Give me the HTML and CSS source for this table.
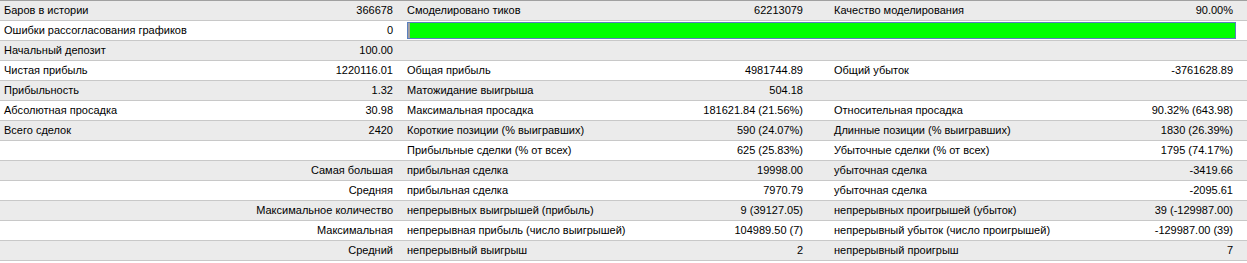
FILE: index.html
```html
<!DOCTYPE html>
<html lang="ru">
<head>
<meta charset="utf-8">
<title>Отчет тестера</title>
<link rel="stylesheet" href="styles.css">
</head>
<body>
<div class="report">
  <div class="row alt">
    <div class="lbl">Баров в истории</div><div class="val">366678</div>
    <div class="lbl2">Смоделировано тиков</div><div class="val">62213079</div>
    <div class="lbl3">Качество моделирования</div><div class="val3">90.00%</div>
  </div>
  <div class="row">
    <div class="lbl">Ошибки рассогласования графиков</div><div class="val">0</div>
    <div class="barcell"><div class="bar"></div></div>
  </div>
  <div class="row alt">
    <div class="lbl">Начальный депозит</div><div class="val">100.00</div>
    <div class="lbl2"></div><div class="val"></div><div class="lbl3"></div><div class="val3"></div>
  </div>
  <div class="row">
    <div class="lbl">Чистая прибыль</div><div class="val">1220116.01</div>
    <div class="lbl2">Общая прибыль</div><div class="val">4981744.89</div>
    <div class="lbl3">Общий убыток</div><div class="val3">-3761628.89</div>
  </div>
  <div class="row alt">
    <div class="lbl">Прибыльность</div><div class="val">1.32</div>
    <div class="lbl2">Матожидание выигрыша</div><div class="val">504.18</div>
    <div class="lbl3"></div><div class="val3"></div>
  </div>
  <div class="row">
    <div class="lbl">Абсолютная просадка</div><div class="val">30.98</div>
    <div class="lbl2">Максимальная просадка</div><div class="val">181621.84 (21.56%)</div>
    <div class="lbl3">Относительная просадка</div><div class="val3">90.32% (643.98)</div>
  </div>
  <div class="row alt">
    <div class="lbl">Всего сделок</div><div class="val">2420</div>
    <div class="lbl2">Короткие позиции (% выигравших)</div><div class="val">590 (24.07%)</div>
    <div class="lbl3">Длинные позиции (% выигравших)</div><div class="val3">1830 (26.39%)</div>
  </div>
  <div class="row">
    <div class="lbl"></div><div class="val"></div>
    <div class="lbl2">Прибыльные сделки (% от всех)</div><div class="val">625 (25.83%)</div>
    <div class="lbl3">Убыточные сделки (% от всех)</div><div class="val3">1795 (74.17%)</div>
  </div>
  <div class="row alt">
    <div class="head">Самая большая</div>
    <div class="lbl2">прибыльная сделка</div><div class="val">19998.00</div>
    <div class="lbl3">убыточная сделка</div><div class="val3">-3419.66</div>
  </div>
  <div class="row">
    <div class="head">Средняя</div>
    <div class="lbl2">прибыльная сделка</div><div class="val">7970.79</div>
    <div class="lbl3">убыточная сделка</div><div class="val3">-2095.61</div>
  </div>
  <div class="row alt">
    <div class="head">Максимальное количество</div>
    <div class="lbl2">непрерывных выигрышей (прибыль)</div><div class="val">9 (39127.05)</div>
    <div class="lbl3">непрерывных проигрышей (убыток)</div><div class="val3">39 (-129987.00)</div>
  </div>
  <div class="row">
    <div class="head">Максимальная</div>
    <div class="lbl2">непрерывная прибыль (число выигрышей)</div><div class="val">104989.50 (7)</div>
    <div class="lbl3">непрерывный убыток (число проигрышей)</div><div class="val3">-129987.00 (39)</div>
  </div>
  <div class="row alt">
    <div class="head">Средний</div>
    <div class="lbl2">непрерывный выигрыш</div><div class="val">2</div>
    <div class="lbl3">непрерывный проигрыш</div><div class="val3">7</div>
  </div>
</div>
</body>
</html>
```

FILE: styles.css
```css
html, body {
  margin: 0;
  padding: 0;
  background: #ffffff;
}

body {
  font-family: "Liberation Sans", Arial, sans-serif;
  font-size: 11px;
  color: #000000;
}

.report {
  border-top: 1px solid #a0a0a0;
}

.row {
  display: grid;
  grid-template-columns: 200px 200px 250px 160px 250px 1fr;
  height: 19px;
  line-height: 19px;
  border-bottom: 1px solid #c8c8c8;
  background: #ffffff;
}

.row.alt {
  background: #ebebeb;
}

.row > div {
  white-space: nowrap;
}

.lbl {
  padding-left: 4px;
}

.val {
  text-align: right;
  padding-right: 7px;
}

.lbl2 {
  padding-left: 7px;
}

.lbl3 {
  padding-left: 24px;
}

.val3 {
  text-align: right;
  padding-right: 14px;
}

.head {
  grid-column: 1 / 3;
  text-align: right;
  padding-right: 7px;
}

.barcell {
  grid-column: 3 / 7;
  padding: 1px 11px 1px 7px;
}

.bar {
  height: 15px;
  border: 1px solid #5a7fc0;
  background: linear-gradient(to right, #a0a0a0 0, #a0a0a0 2px, #00ff00 2px);
}
```
